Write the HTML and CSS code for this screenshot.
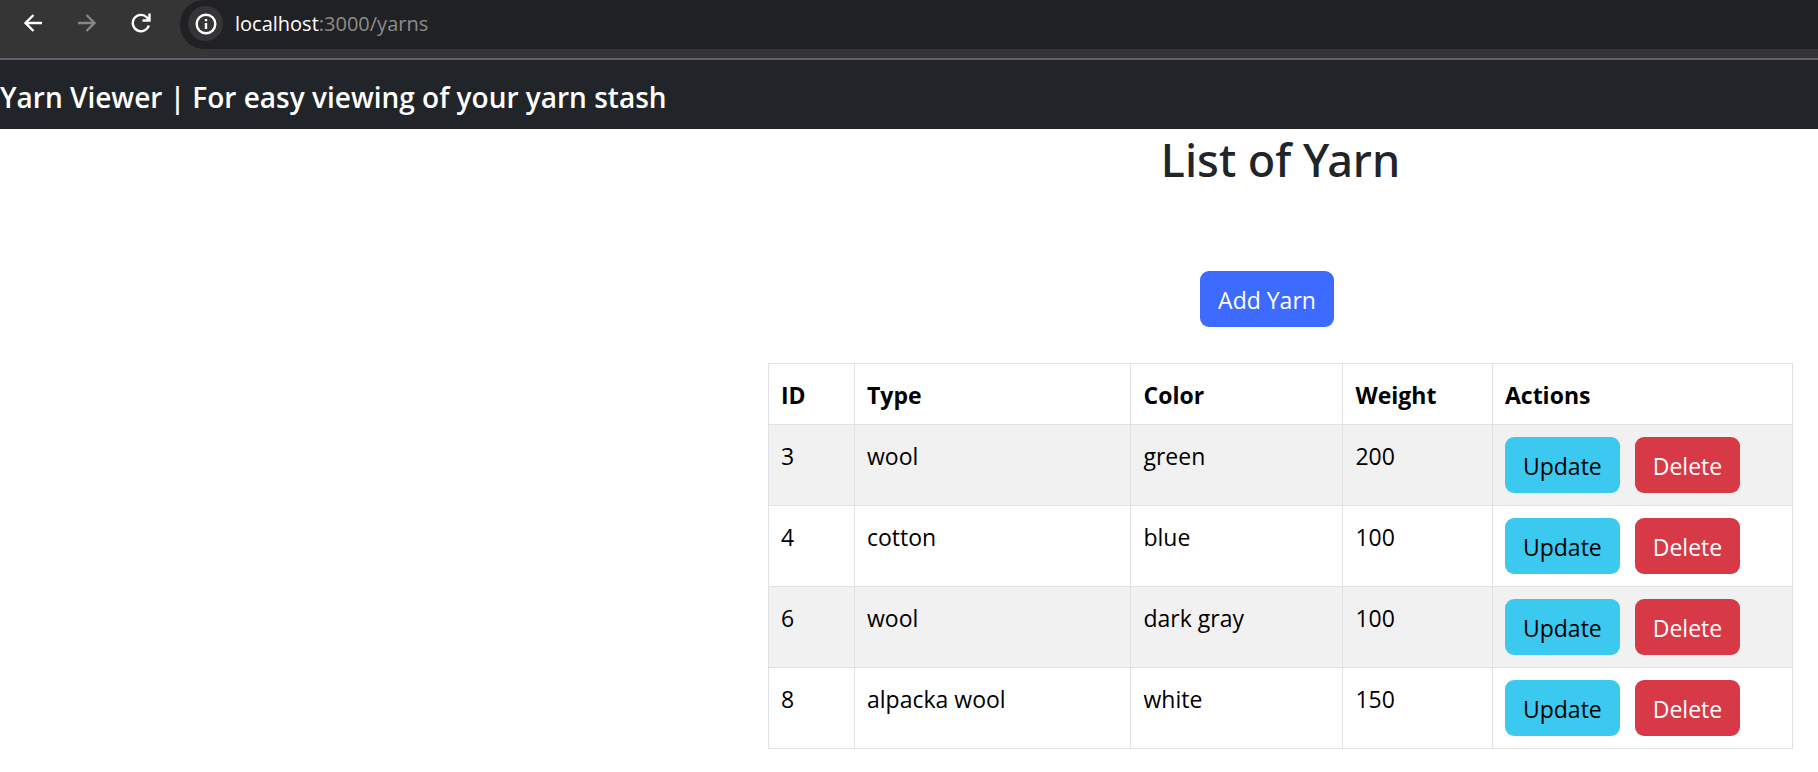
FILE: index.html
```html
<!DOCTYPE html>
<html lang="en">
<head>
<meta charset="utf-8">
<title>Yarn Viewer</title>
<link rel="stylesheet" href="styles.css">
</head>
<body>
<div class="browser-bar">
  <div class="nav-buttons">
    <button class="nav-button" type="button" aria-label="Back">
      <svg viewBox="0 0 20 20" width="20" height="20"><path d="M19 10H3M10.500 2L2.500 10l8 8"/></svg>
    </button>
    <button class="nav-button nav-button-off" type="button" aria-label="Forward">
      <svg viewBox="0 0 20 20" width="20" height="20"><path d="M1 10h16M9.500 2l8 8l-8 8"/></svg>
    </button>
    <button class="nav-button" type="button" aria-label="Reload">
      <svg viewBox="0 0 20 20" width="20" height="20"><path d="M17.800 12.500A8.200 8.200 0 1 1 16 4.500L18 6.700M18.500 .5V7.500H11.500"/></svg>
    </button>
  </div>
  <div class="address">
    <button class="site-info" type="button" aria-label="Site information">
      <svg viewBox="0 0 22 22" width="22" height="22"><circle cx="11" cy="11" r="9.300"/><path d="M11 10v6M11 6v2.300"/></svg>
    </button>
    <span class="url"><span class="url-host">localhost</span>:3000/yarns</span>
  </div>
</div>
<header class="navbar"><a class="brand" href="#">Yarn Viewer | For easy viewing of your yarn stash</a></header>
<main class="content">
  <h1 class="title">List of Yarn</h1>
  <button class="btn btn-primary" type="button">Add Yarn</button>
  <table class="yarns">
    <colgroup><col class="col-id"><col class="col-type"><col class="col-color"><col class="col-weight"><col></colgroup>
    <thead><tr><th>ID</th><th>Type</th><th>Color</th><th>Weight</th><th>Actions</th></tr></thead>
    <tbody>
      <tr><td>3</td><td>wool</td><td>green</td><td>200</td><td><div class="actions"><button class="btn btn-info" type="button">Update</button><button class="btn btn-danger" type="button">Delete</button></div></td></tr>
      <tr><td>4</td><td>cotton</td><td>blue</td><td>100</td><td><div class="actions"><button class="btn btn-info" type="button">Update</button><button class="btn btn-danger" type="button">Delete</button></div></td></tr>
      <tr><td>6</td><td>wool</td><td>dark gray</td><td>100</td><td><div class="actions"><button class="btn btn-info" type="button">Update</button><button class="btn btn-danger" type="button">Delete</button></div></td></tr>
      <tr><td>8</td><td>alpacka wool</td><td>white</td><td>150</td><td><div class="actions"><button class="btn btn-info" type="button">Update</button><button class="btn btn-danger" type="button">Delete</button></div></td></tr>
    </tbody>
  </table>
</main>
</body>
</html>
```
FILE: styles.css
```css
* { box-sizing: border-box; }

body {
  margin: 0;
  background: #fff;
  color: #212529;
  font-family: "Open Sans", "Noto Sans", sans-serif;
  font-size: 23px;
  line-height: 38px;
}

button { font: inherit; cursor: pointer; }

.browser-bar {
  display: flex;
  align-items: flex-start;
  gap: 22px;
  padding: 0 0 9px 16px;
  background: #353535;
  border-bottom: 2px solid #626262;
}

.nav-buttons {
  display: flex;
  gap: 20px;
  padding-top: 6px;
}

.nav-button {
  display: flex;
  align-items: center;
  justify-content: center;
  width: 34px;
  height: 34px;
  padding: 0;
  border: 0;
  background: none;
  color: #fff;
}

.nav-button-off { color: #868686; }

svg {
  fill: none;
  stroke: currentColor;
  stroke-width: 2.4;
}

.address {
  display: flex;
  flex: 1;
  align-items: center;
  gap: 12px;
  height: 49px;
  padding: 0 0 2px 8px;
  background: #202124;
  border-radius: 24px 0 0 24px;
}

.site-info {
  display: flex;
  align-items: center;
  justify-content: center;
  width: 35px;
  height: 35px;
  padding: 0;
  border: 0;
  border-radius: 50%;
  background: #353535;
  color: #fff;
}

.url {
  color: #8c8c8c;
  font-size: 20px;
}

.url-host { color: #fff; }

.navbar {
  padding: 18px 0 13px;
  background: #212529;
}

.brand {
  display: block;
  color: #fff;
  font-size: 28px;
  font-weight: 600;
  text-decoration: none;
}

.content {
  display: flex;
  flex-direction: column;
  align-items: center;
  padding: 0 25px 23px 768px;
}

.title {
  margin: 0 0 80px;
  font-family: "Noto Sans", "Open Sans", sans-serif;
  font-size: 45px;
  font-weight: 500;
  line-height: 62px;
}

.btn {
  height: 56px;
  padding: 9px 17px 7px;
  border: 1px solid transparent;
  border-radius: 9px;
}

.btn-primary {
  margin: 0 27px 36px 0;
  background: #3d6aff;
  color: #fff;
}

.btn-info { background: #3bc9f0; color: #000; }

.btn-danger { background: #d73947; color: #fff; }

.yarns {
  width: 100%;
  border-collapse: collapse;
  table-layout: fixed;
  color: #000;
}

.yarns th,
.yarns td {
  padding: 12px;
  border: 1px solid #dee2e6;
  text-align: left;
  vertical-align: top;
}

.yarns th {
  padding-bottom: 10px;
  font-weight: 700;
}

.yarns tbody tr:nth-child(odd) { background: #f1f1f1; }

.col-id { width: 8.4%; }
.col-type { width: 27%; }
.col-color { width: 20.7%; }
.col-weight { width: 14.6%; }

.actions {
  display: flex;
  gap: 15px;
}
```
